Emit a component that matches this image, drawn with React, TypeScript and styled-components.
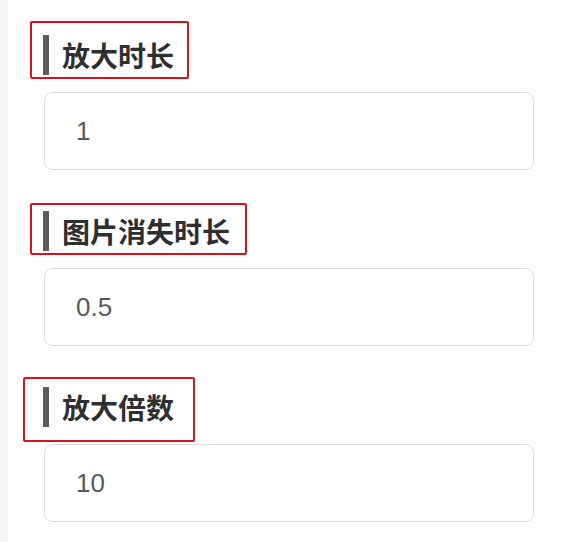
import React from 'react'
import styled, { createGlobalStyle } from 'styled-components'

const GlobalStyle = createGlobalStyle`
  html, body {
    margin: 0;
    padding: 0;
    background: #ffffff;
    font-family: "Liberation Sans", "Noto Sans CJK SC", sans-serif;
  }
`

const Page = styled.div`
  display: flex;
  min-height: 542px;
  background: #ffffff;
`

const SideStrip = styled.div`
  width: 8px;
  flex-shrink: 0;
  background: #f3f5f8;
`

const Main = styled.div`
  flex: 1;
  display: flex;
  flex-direction: column;
  gap: 41px;
  padding: 35px 28px 0 35px;
`

const Section = styled.div`
  display: flex;
  flex-direction: column;
  gap: 17px;
`

const LabelRow = styled.div`
  position: relative;
  display: flex;
  align-items: center;
  height: 40px;
  align-self: flex-start;
`

const LabelBar = styled.span`
  width: 6px;
  height: 40px;
  background: #5b5b5b;
  margin-right: 13px;
`

const LabelText = styled.span`
  font-family: "Noto Sans CJK SC", sans-serif;
  font-size: 28px;
  font-weight: 700;
  color: #2f2f2f;
  line-height: 1;
`

type Mark = { $t: number; $l: number; $r: number; $b: number }

const Annotation = styled.span<Mark>`
  position: absolute;
  top: ${(p) => p.$t}px;
  left: ${(p) => p.$l}px;
  right: ${(p) => p.$r}px;
  bottom: ${(p) => p.$b}px;
  border: 2.5px solid #d4141e;
  border-radius: 2px;
  pointer-events: none;
`

const Field = styled.input`
  box-sizing: border-box;
  width: 490px;
  height: 78px;
  margin-left: 1px;
  padding: 0 0 0 31px;
  border: 1.5px solid #dcdcdc;
  border-radius: 8px;
  background: #ffffff;
  font-family: "Liberation Sans", Arial, sans-serif;
  font-size: 26px;
  color: #5a5a5a;
  outline: none;
`

const fields = [
  { label: '放大时长', value: '1', mark: { $t: -14, $l: -13, $r: -15, $b: -4 } },
  { label: '图片消失时长', value: '0.5', mark: { $t: -8, $l: -13, $r: -17, $b: -4 } },
  { label: '放大倍数', value: '10', mark: { $t: -10, $l: -20, $r: -21, $b: -15 } },
]

const App: React.FunctionComponent = () => {
  return (
    <>
      <GlobalStyle />
      <Page>
        <SideStrip />
        <Main>
          {fields.map((f) => (
            <Section key={f.label}>
              <LabelRow>
                <LabelBar />
                <LabelText>{f.label}</LabelText>
                <Annotation {...f.mark} />
              </LabelRow>
              <Field readOnly value={f.value} />
            </Section>
          ))}
        </Main>
      </Page>
    </>
  )
}

export default App
